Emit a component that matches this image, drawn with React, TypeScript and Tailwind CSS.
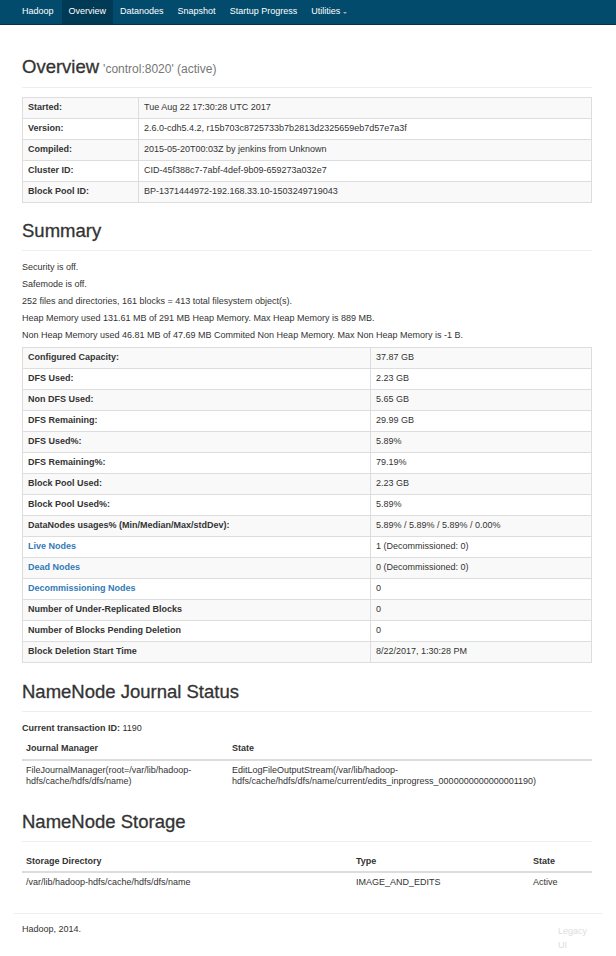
// Hadoop NameNode overview page (dfshealth)
import React from 'react';

const overviewRows: [string, string][] = [
  ['Started:', 'Tue Aug 22 17:30:28 UTC 2017'],
  ['Version:', '2.6.0-cdh5.4.2, r15b703c8725733b7b2813d2325659eb7d57e7a3f'],
  ['Compiled:', '2015-05-20T00:03Z by jenkins from Unknown'],
  ['Cluster ID:', 'CID-45f388c7-7abf-4def-9b09-659273a032e7'],
  ['Block Pool ID:', 'BP-1371444972-192.168.33.10-1503249719043'],
];

const summaryRows: { label: string; value: string; link?: boolean }[] = [
  { label: 'Configured Capacity:', value: '37.87 GB' },
  { label: 'DFS Used:', value: '2.23 GB' },
  { label: 'Non DFS Used:', value: '5.65 GB' },
  { label: 'DFS Remaining:', value: '29.99 GB' },
  { label: 'DFS Used%:', value: '5.89%' },
  { label: 'DFS Remaining%:', value: '79.19%' },
  { label: 'Block Pool Used:', value: '2.23 GB' },
  { label: 'Block Pool Used%:', value: '5.89%' },
  { label: 'DataNodes usages% (Min/Median/Max/stdDev):', value: '5.89% / 5.89% / 5.89% / 0.00%' },
  { label: 'Live Nodes', value: '1 (Decommissioned: 0)', link: true },
  { label: 'Dead Nodes', value: '0 (Decommissioned: 0)', link: true },
  { label: 'Decommissioning Nodes', value: '0', link: true },
  { label: 'Number of Under-Replicated Blocks', value: '0' },
  { label: 'Number of Blocks Pending Deletion', value: '0' },
  { label: 'Block Deletion Start Time', value: '8/22/2017, 1:30:28 PM' },
];

const summaryLines = [
  'Security is off.',
  'Safemode is off.',
  '252 files and directories, 161 blocks = 413 total filesystem object(s).',
  'Heap Memory used 131.61 MB of 291 MB Heap Memory. Max Heap Memory is 889 MB.',
  'Non Heap Memory used 46.81 MB of 47.69 MB Commited Non Heap Memory. Max Non Heap Memory is -1 B.',
];

const navItems = ['Overview', 'Datanodes', 'Snapshot', 'Startup Progress'];

function SectionHeader({ title, sub, className }: { title: string; sub?: string; className: string }) {
  return (
    <div className={`border-b border-[#eee] ${className}`}>
      <h1 className="text-[18.5px] leading-[20px] font-normal text-[#333]">
        <span className="[-webkit-text-stroke:0.3px_#333]">{title}</span>
        {sub && <small className="ml-[4px] text-[12px] font-normal text-[#777]">{sub}</small>}
      </h1>
    </div>
  );
}

export default function App() {
  return (
    <div className="min-h-screen bg-white font-['Liberation_Sans',Arial,sans-serif] text-[9px] leading-[11.5px] text-[#333]">
      {/* 導覽列 */}
      <div className="flex h-[25px] items-stretch border-b border-[#01344c] bg-[#024b6c] pl-[15px] text-white">
        <span className="flex items-center px-[7px] pr-[8px]">Hadoop</span>
        {navItems.map((item) => (
          <span
            key={item}
            className={`flex items-center px-[7px] ${item === 'Overview' ? 'bg-[#013a55]' : ''}`}
          >
            {item}
          </span>
        ))}
        <span className="flex items-center gap-[3px] px-[7px]">
          Utilities
          <span className="mt-[1px] h-0 w-0 border-x-[2.5px] border-t-[2.5px] border-x-transparent border-t-[#aab]" />
        </span>
      </div>

      <div className="pl-[22px] pr-[24px]">
        {/* Overview */}
        <SectionHeader title="Overview" sub="'control:8020' (active)" className="mt-[32px] pb-[8px]" />
        <table className="mt-[9px] w-full border-collapse border border-[#ddd]">
          <tbody>
            {overviewRows.map(([k, v], i) => (
              <tr key={k} className={i % 2 === 0 ? 'bg-[#f9f9f9]' : ''}>
                <th className="w-[116px] border border-[#ddd] px-[5px] py-[4.25px] text-left font-bold">{k}</th>
                <td className="border border-[#ddd] px-[5px] py-[4.25px]">{v}</td>
              </tr>
            ))}
          </tbody>
        </table>

        {/* Summary */}
        <SectionHeader title="Summary" className="mt-[18px] pb-[9px]" />
        <div className="mt-[11px]">
          {summaryLines.map((l) => (
            <p key={l} className="mb-[5.5px]">
              {l}
            </p>
          ))}
        </div>
        <table className="w-full border-collapse border border-[#ddd]">
          <tbody>
            {summaryRows.map((r, i) => (
              <tr key={r.label} className={i % 2 === 0 ? 'bg-[#f9f9f9]' : ''}>
                <th className="w-[348px] border border-[#ddd] px-[5px] py-[4.25px] text-left font-bold">
                  {r.link ? <span className="text-[#337ab7]">{r.label}</span> : r.label}
                </th>
                <td className="border border-[#ddd] px-[5px] py-[4.25px]">{r.value}</td>
              </tr>
            ))}
          </tbody>
        </table>

        {/* NameNode Journal Status */}
        <SectionHeader title="NameNode Journal Status" className="mt-[19px] pb-[9px]" />
        <p className="mt-[11px] mb-[4.5px]">
          <b>Current transaction ID:</b> 1190
        </p>
        <table className="w-full border-collapse">
          <thead>
            <tr>
              <th className="w-[206px] border-b-2 border-[#ddd] px-[4px] py-[4px] text-left font-bold">Journal Manager</th>
              <th className="border-b-2 border-[#ddd] px-[4px] py-[4px] text-left font-bold">State</th>
            </tr>
          </thead>
          <tbody>
            <tr>
              <td className="px-[4px] py-[4px] align-top">
                FileJournalManager(root=/var/lib/hadoop-
                <br />
                hdfs/cache/hdfs/dfs/name)
              </td>
              <td className="px-[4px] py-[4px] align-top">
                EditLogFileOutputStream(/var/lib/hadoop-
                <br />
                hdfs/cache/hdfs/dfs/name/current/edits_inprogress_0000000000000001190)
              </td>
            </tr>
          </tbody>
        </table>

        {/* NameNode Storage */}
        <SectionHeader title="NameNode Storage" className="mt-[20px] pb-[9px]" />
        <table className="mt-[10px] w-full border-collapse">
          <thead>
            <tr>
              <th className="w-[330px] border-b-2 border-[#ddd] px-[4px] py-[4px] text-left font-bold">Storage Directory</th>
              <th className="w-[177px] border-b-2 border-[#ddd] px-[4px] py-[4px] text-left font-bold">Type</th>
              <th className="border-b-2 border-[#ddd] px-[4px] py-[4px] text-left font-bold">State</th>
            </tr>
          </thead>
          <tbody>
            <tr>
              <td className="px-[4px] py-[4px]">/var/lib/hadoop-hdfs/cache/hdfs/dfs/name</td>
              <td className="px-[4px] py-[4px]">IMAGE_AND_EDITS</td>
              <td className="px-[4px] py-[4px]">Active</td>
            </tr>
          </tbody>
        </table>
      </div>

      {/* 頁尾 */}
      <div className="mx-[14px] mt-[20px] flex justify-between border-t border-[#eee] pt-[10px] pl-[8px] pr-[8px] pb-[10px]">
        <p>Hadoop, 2014.</p>
        <p className="w-[36px] leading-[14px] text-[#ddd]">Legacy UI</p>
      </div>
    </div>
  );
}
